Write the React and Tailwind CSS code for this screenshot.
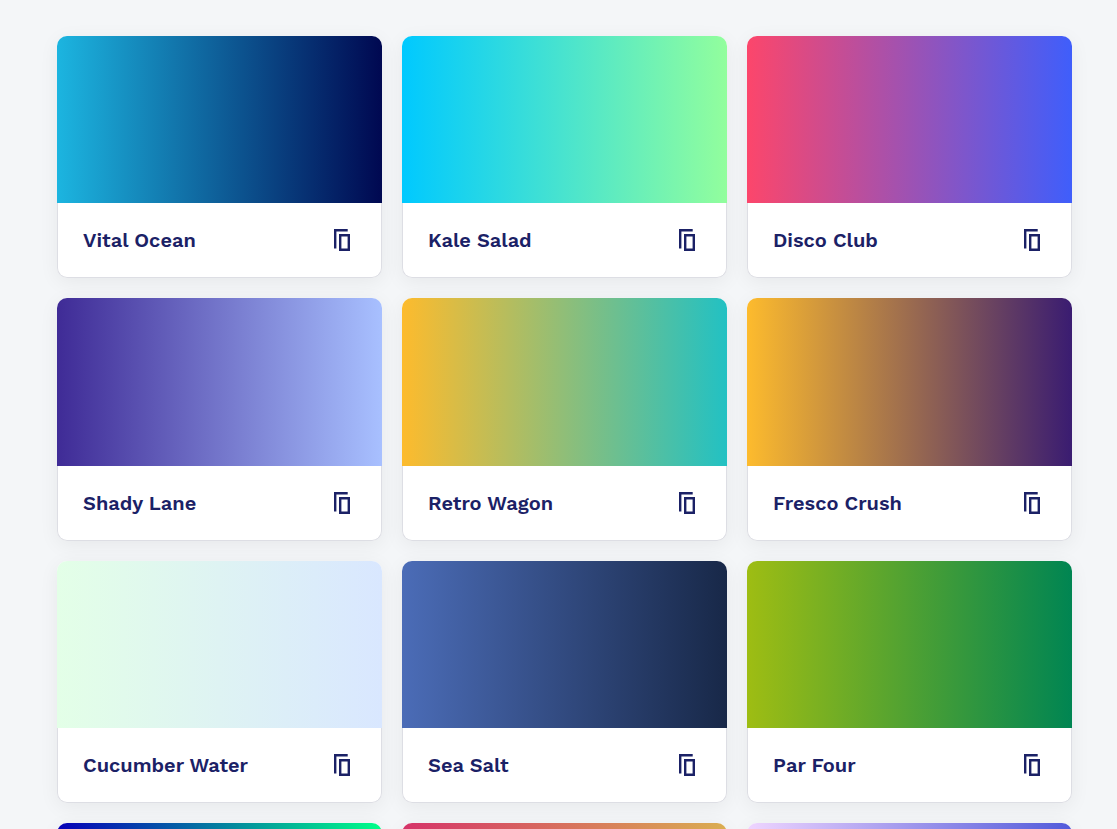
const gradients = [
    {name: "Vital Ocean", swatch: "from-[#1cb5e0] to-[#000851]"},
    {name: "Kale Salad", swatch: "from-[#00c9ff] to-[#92fe9d]"},
    {name: "Disco Club", swatch: "from-[#fc466b] to-[#3f5efb]"},
    {name: "Shady Lane", swatch: "from-[#3f2b96] to-[#a8c0ff]"},
    {name: "Retro Wagon", swatch: "from-[#fdbb2d] to-[#22c1c3]"},
    {name: "Fresco Crush", swatch: "from-[#fdbb2d] to-[#3a1c71]"},
    {name: "Cucumber Water", swatch: "from-[#e3ffe7] to-[#d9e7ff]"},
    {name: "Sea Salt", swatch: "from-[#4b6cb7] to-[#182848]"},
    {name: "Par Four", swatch: "from-[#9ebd13] to-[#008552]"},
    {name: "Ooey Gooey", swatch: "from-[#0700b8] to-[#00ff88]"},
    {name: "Bloody Mimosa", swatch: "from-[#d53369] to-[#daae51]"},
    {name: "Lovely Lilly", swatch: "from-[#efd5ff] to-[#515ada]"},
];

function CopyIcon() {
    return (
        <svg width="16" height="22" viewBox="0 0 16 22" fill="none" stroke="currentColor" strokeWidth="2.4" aria-hidden="true">
            <path d="M1.2 19.6V1.2H13.7" />
            <path d="M6.2 6.2H14.8V20.8H6.2Z" />
        </svg>
    );
}

function GradientCard({ name, swatch }) {
    return (
        <article className="rounded-[10px] bg-white shadow-[0_4px_20px_rgba(0,0,0,0.06)]">
            <div className={`aspect-[33/17] rounded-t-[10px] bg-linear-to-r/srgb ${swatch}`} />
            <div className="flex h-[75px] items-center justify-between rounded-b-[10px] border border-t-0 border-[#dddee4] pr-[31px] pl-[25px]">
                <h2 className="text-xl font-semibold">{name}</h2>
                <button type="button" aria-label={`Copy ${name}`} className="cursor-pointer">
                    <CopyIcon />
                </button>
            </div>
        </article>
    );
}

function App() {
    return (
        <main className="min-h-screen bg-[#f4f6f8] pt-9 pr-[45px] pb-9 pl-[57px] font-['Work_Sans','Inter',sans-serif] text-[#1b2166]">
            <div className="grid grid-cols-3 gap-5">
                {gradients.map((gradient) => (
                    <GradientCard key={gradient.name} {...gradient} />
                ))}
            </div>
        </main>
    );
}

export default App;
